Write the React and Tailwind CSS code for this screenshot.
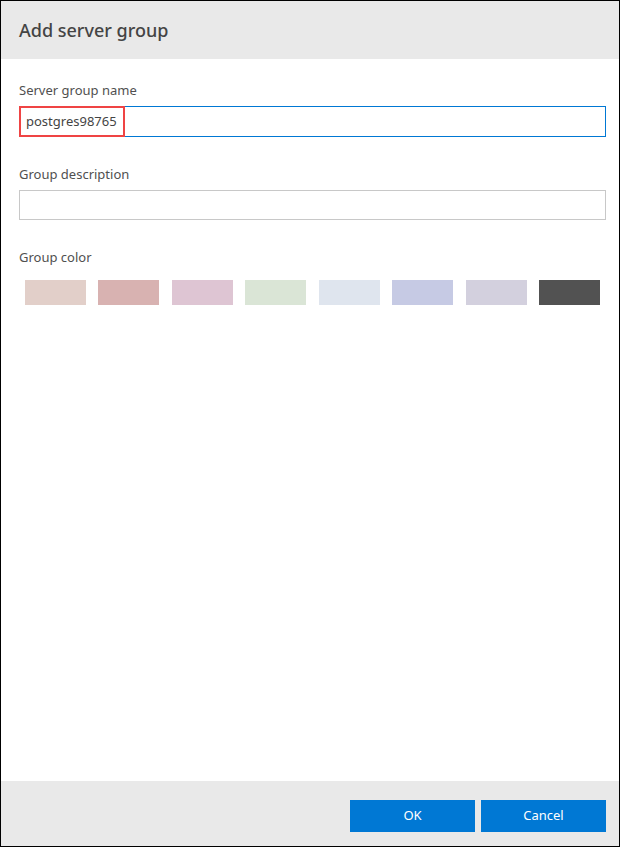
import React from 'react';

const SWATCHES = ['#e2cfc9', '#d8b2b1', '#dec5d3', '#dae5d6', '#dfe5ee', '#c6cae4', '#d3d0de', '#525252'];

export default function App() {
  return (
    <div
      className="w-[620px] h-[847px] flex flex-col border border-black bg-white text-[#444]"
      style={{ fontFamily: '"Noto Sans", "Open Sans", sans-serif' }}
    >
      {/* Header */}
      <div className="h-[58px] shrink-0 bg-[#e9e9e9] flex items-center px-[18px]">
        <h1 className="text-[18px] font-medium text-[#444]">Add server group</h1>
      </div>

      {/* Body */}
      <div className="flex-1 flex flex-col pl-[18px] pr-[13px] pt-[22px]">
        <label className="text-[13px] leading-[18px] text-[#505050]">Server group name</label>
        <div className="mt-[7px] h-[31px] border border-[#0078d4] flex items-stretch">
          <div className="w-[106px] -ml-px -my-px border-2 border-[#ef4444] flex items-center pl-[5px] text-[13px] text-[#444]">
            postgres98765
          </div>
        </div>

        <label className="mt-[28px] text-[13px] leading-[18px] text-[#505050]">Group description</label>
        <div className="mt-[7px] h-[30px] border border-[#c8c8c8]" />

        <label className="mt-[28px] text-[13px] leading-[18px] text-[#505050]">Group color</label>
        <div className="mt-[14px] flex justify-between pl-[6px] pr-[6px]">
          {SWATCHES.map((c) => (
            <div key={c} className="w-[61px] h-[25px]" style={{ backgroundColor: c }} />
          ))}
        </div>
      </div>

      {/* Footer */}
      <div className="h-[65px] shrink-0 bg-[#e9e9e9] flex justify-end items-start gap-[6px] pt-[19px] pr-[13px]">
        <button className="w-[125px] h-[32px] bg-[#0078d4] text-white text-[13px]">OK</button>
        <button className="w-[125px] h-[32px] bg-[#0078d4] text-white text-[13px]">Cancel</button>
      </div>
    </div>
  );
}
